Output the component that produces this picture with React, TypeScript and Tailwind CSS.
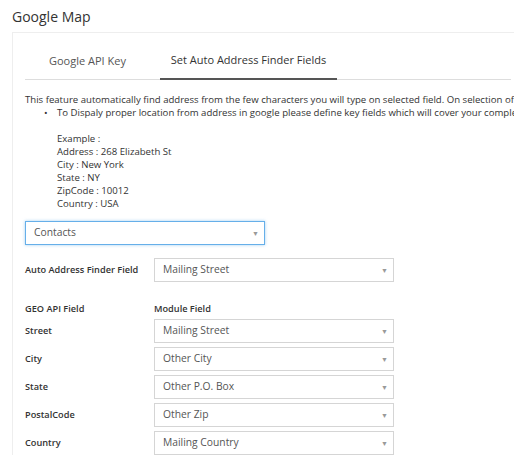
import React from "react";

const fieldRows = [
  { label: "Street", value: "Mailing Street" },
  { label: "City", value: "Other City" },
  { label: "State", value: "Other P.O. Box" },
  { label: "PostalCode", value: "Other Zip" },
  { label: "Country", value: "Mailing Country" },
];

function FakeSelect({ value, focused = false }: { value: string; focused?: boolean }) {
  return (
    <div
      className={
        "w-[240px] h-[24px] flex items-center justify-between pl-[8px] pr-[5px] bg-white border " +
        (focused ? "border-[#66afe9] shadow-[0_0_3px_rgba(102,175,233,0.6)]" : "border-[#d5d5d5]")
      }
    >
      <span className="text-[10.3px] text-[#555]">{value}</span>
      <span className="text-[7px] text-[#999] leading-none">▼</span>
    </div>
  );
}

export default function App() {
  return (
    <div className="w-[514px] h-[465px] overflow-hidden bg-white text-[#333] font-['Open_Sans',sans-serif]">
      <div className="pl-[12px] pt-[7px] h-[32px] text-[14px] leading-[20px] text-[#333]">Google Map</div>

      <div className="ml-[12px] w-[800px] border-l border-t border-[#eee] pl-[12px]">
        <div className="flex w-[486px] h-[47px] border-b border-[#ddd]">
          <div className="w-[135px] pl-[24px] pt-[10px] flex items-center text-[11px] text-[#555]">Google API Key</div>
          <div className="w-[177px] pt-[10px] flex items-center justify-center text-[11px] text-[#333] border-b-2 border-[#555] -mb-px">
            Set Auto Address Finder Fields
          </div>
        </div>

        <div className="pt-[13px] text-[9.6px] leading-[13px] whitespace-nowrap">
          <div>
            This feature automatically find address from the few characters you will type on selected field. On selection of
          </div>
          <div className="flex pl-[19px]">
            <span className="w-[13px]">•</span>
            <span>To Dispaly proper location from address in google please define key fields which will cover your comple</span>
          </div>
          <div className="pl-[32px] pt-[13px]">
            <div>Example :</div>
            <div>Address : 268 Elizabeth St</div>
            <div>City : New York</div>
            <div>State : NY</div>
            <div>ZipCode : 10012</div>
            <div>Country : USA</div>
          </div>
        </div>

        <div className="pt-[11px]">
          <FakeSelect value="Contacts" focused />
        </div>

        <div className="flex items-center pt-[13px]">
          <div className="w-[129px] text-[9.2px] font-semibold">Auto Address Finder Field</div>
          <FakeSelect value="Mailing Street" />
        </div>

        <div className="flex pt-[20px] text-[9.2px] font-semibold leading-[14px]">
          <div className="w-[129px]">GEO API Field</div>
          <div>Module Field</div>
        </div>

        <div className="flex flex-col gap-[4px] pt-[3px]">
          {fieldRows.map((r) => (
            <div key={r.label} className="flex items-center">
              <div className="w-[129px] text-[9.2px] font-semibold">{r.label}</div>
              <FakeSelect value={r.value} />
            </div>
          ))}
        </div>
      </div>
    </div>
  );
}
